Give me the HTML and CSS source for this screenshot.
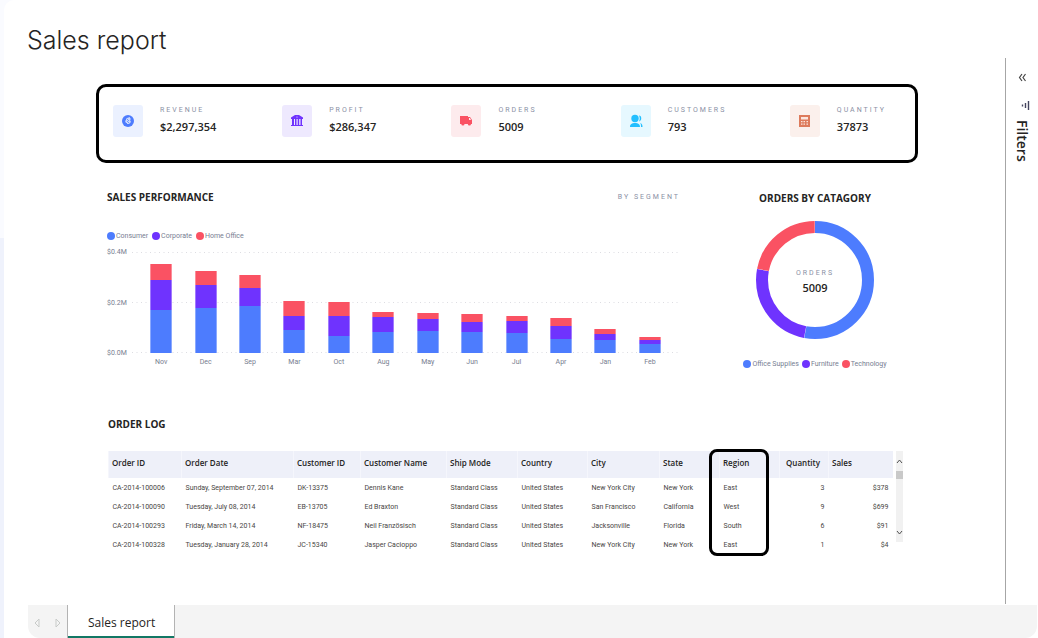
FILE: index.html
```html
<!DOCTYPE html>
<html lang="en">
<head>
<meta charset="utf-8">
<title>Sales report</title>
<link rel="stylesheet" href="styles.css">
</head>
<body>
<div class="page">
  <h1 class="page-title">Sales report</h1>
  <div class="body">
    <main class="report">
      <section class="kpis">
        <div class="kpi">
          <span class="kpi-icon blue"><svg width="14" height="14" viewBox="0 0 14 14"><circle cx="7" cy="7" r="6" fill="#4d7cfe"/><path d="M6 4l3-1v1l1 1-1 1 1 2-2 2H6V9H5L4 7l1-1V5z" fill="#c9d8fd"/><path d="M6 5l2 2M6 7l2 2" stroke="#6f95fb"/></svg></span>
          <div><div class="label">REVENUE</div><div class="value">$2,297,354</div></div>
        </div>
        <div class="kpi">
          <span class="kpi-icon violet"><svg width="14" height="14" viewBox="0 0 14 14"><path d="M1 5V3.500L5 1h4l4 2.500V5zM2 5h2v6H2zM5 5h1.500v6H5zM7.700 5h1.500v6H7.700zM10.500 5H12v6h-1.500zM1 11h12v1H1z" fill="#6f33fe"/><circle cx="7" cy="3" r=".6" fill="#eee9fe"/></svg></span>
          <div><div class="label">PROFIT</div><div class="value">$286,347</div></div>
        </div>
        <div class="kpi">
          <span class="kpi-icon red"><svg width="14" height="14" viewBox="0 0 14 14"><path d="M1 2h8v1h2l2 3v4h-1a1.600 1.600 0 0 1-3.200 0H5.500a1.600 1.600 0 0 1-3.200 0H1z" fill="#fa5263"/><path d="M10 4h1l1 2h-2z" fill="#fdebed"/></svg></span>
          <div><div class="label">ORDERS</div><div class="value">5009</div></div>
        </div>
        <div class="kpi">
          <span class="kpi-icon cyan"><svg width="14" height="14" viewBox="0 0 14 14"><circle cx="6" cy="4.500" r="3.700" fill="#23bfff"/><path d="M1 13c0-3 2-4 5-4s5 1 5 4zM10 1.500c3 0 3 5.500 0 6 1-2 1-4 0-6zM11 9c2 .5 2.500 2 2.500 4H12c0-2 0-3-1-4z" fill="#23bfff"/></svg></span>
          <div><div class="label">CUSTOMERS</div><div class="value">793</div></div>
        </div>
        <div class="kpi">
          <span class="kpi-icon orange"><svg width="14" height="14" viewBox="0 0 14 14"><path d="M1 1h11v12H1z" fill="#dd7b5c"/><path d="M3 3h7v2.500H3zM3 7h1.500v1.300H3zM5.500 7H7v1.300H5.500zM8.500 7H10v1.300H8.500zM3 9.500h1.500v1.300H3zM5.500 9.500H7v1.300H5.500zM8.500 9.500H10v1.300H8.500z" fill="#fbe6df"/></svg></span>
          <div><div class="label">QUANTITY</div><div class="value">37873</div></div>
        </div>
      </section>

      <div class="charts">
        <section class="sales">
          <div class="panel-head"><h2>SALES PERFORMANCE</h2><span class="label">BY SEGMENT</span></div>
          <ul class="legend"><li><i class="c1"></i>Consumer</li><li><i class="c2"></i>Corporate</li><li><i class="c3"></i>Home Office</li></ul>
          <div class="chart">
            <div class="y-axis"><span>$0.4M</span><span>$0.2M</span><span>$0.0M</span></div>
            <div class="plot">
              <svg class="gridlines" width="100%" height="101"><path d="M0 .5h2000M0 50.500h2000M0 100.500h2000" stroke="#dddde2" stroke-dasharray="1 3.500"/></svg>
              <div class="bars">
                <div class="bar"><b class="c3" style="height:16px"></b><b class="c2" style="height:30px"></b><b class="c1" style="height:43px"></b></div>
                <div class="bar"><b class="c3" style="height:14px"></b><b class="c2" style="height:23px"></b><b class="c1" style="height:45px"></b></div>
                <div class="bar"><b class="c3" style="height:13px"></b><b class="c2" style="height:18px"></b><b class="c1" style="height:47px"></b></div>
                <div class="bar"><b class="c3" style="height:15px"></b><b class="c2" style="height:14px"></b><b class="c1" style="height:23px"></b></div>
                <div class="bar"><b class="c3" style="height:14px"></b><b class="c2" style="height:20px"></b><b class="c1" style="height:17px"></b></div>
                <div class="bar"><b class="c3" style="height:5px"></b><b class="c2" style="height:15px"></b><b class="c1" style="height:21px"></b></div>
                <div class="bar"><b class="c3" style="height:6px"></b><b class="c2" style="height:12px"></b><b class="c1" style="height:22px"></b></div>
                <div class="bar"><b class="c3" style="height:8px"></b><b class="c2" style="height:10px"></b><b class="c1" style="height:21px"></b></div>
                <div class="bar"><b class="c3" style="height:5px"></b><b class="c2" style="height:12px"></b><b class="c1" style="height:20px"></b></div>
                <div class="bar"><b class="c3" style="height:8px"></b><b class="c2" style="height:13px"></b><b class="c1" style="height:14px"></b></div>
                <div class="bar"><b class="c3" style="height:5px"></b><b class="c2" style="height:6px"></b><b class="c1" style="height:13px"></b></div>
                <div class="bar"><b class="c3" style="height:3px"></b><b class="c2" style="height:4px"></b><b class="c1" style="height:9px"></b></div>
              </div>
              <div class="x-axis"><span>Nov</span><span>Dec</span><span>Sep</span><span>Mar</span><span>Oct</span><span>Aug</span><span>May</span><span>Jun</span><span>Jul</span><span>Apr</span><span>Jan</span><span>Feb</span></div>
            </div>
          </div>
        </section>
        <section class="category">
          <h2>ORDERS BY CATAGORY</h2>
          <div class="donut">
            <svg width="120" height="120" viewBox="0 0 120 120">
              <g fill="none" stroke-width="12" transform="rotate(-90 60 60)">
                <circle cx="60" cy="60" r="53" stroke="#4d7cfe" pathLength="360" stroke-dasharray="190.500 360"/>
                <circle cx="60" cy="60" r="53" stroke="#6f33fe" pathLength="360" stroke-dasharray="90 360" stroke-dashoffset="-190.800"/>
                <circle cx="60" cy="60" r="53" stroke="#fa5263" pathLength="360" stroke-dasharray="78.700 360" stroke-dashoffset="-281"/>
              </g>
            </svg>
            <div class="donut-text"><span class="label">ORDERS</span><span class="value">5009</span></div>
          </div>
          <ul class="legend"><li><i class="c1"></i>Office Supplies</li><li><i class="c2"></i>Furniture</li><li><i class="c3"></i>Technology</li></ul>
        </section>
      </div>

      <section class="log">
        <h2>ORDER LOG</h2>
        <div class="log-body">
          <div class="table-wrap">
            <table>
              <colgroup><col class="w73"><col class="w112"><col class="w67"><col class="w86"><col class="w71"><col class="w70"><col class="w72"><col class="w60"><col class="w60"><col class="w49"><col class="w64"></colgroup>
              <thead><tr><th>Order ID</th><th>Order Date</th><th>Customer ID</th><th>Customer Name</th><th>Ship Mode</th><th>Country</th><th>City</th><th>State</th><th>Region</th><th class="num">Quantity</th><th>Sales</th></tr></thead>
              <tbody>
                <tr><td>CA-2014-100006</td><td>Sunday, September 07, 2014</td><td>DK-13375</td><td>Dennis Kane</td><td>Standard Class</td><td>United States</td><td>New York City</td><td>New York</td><td>East</td><td class="num">3</td><td class="num">$378</td></tr>
                <tr><td>CA-2014-100090</td><td>Tuesday, July 08, 2014</td><td>EB-13705</td><td>Ed Braxton</td><td>Standard Class</td><td>United States</td><td>San Francisco</td><td>California</td><td>West</td><td class="num">9</td><td class="num">$699</td></tr>
                <tr><td>CA-2014-100293</td><td>Friday, March 14, 2014</td><td>NF-18475</td><td>Neil Französisch</td><td>Standard Class</td><td>United States</td><td>Jacksonville</td><td>Florida</td><td>South</td><td class="num">6</td><td class="num">$91</td></tr>
                <tr><td>CA-2014-100328</td><td>Tuesday, January 28, 2014</td><td>JC-15340</td><td>Jasper Cacioppo</td><td>Standard Class</td><td>United States</td><td>New York City</td><td>New York</td><td>East</td><td class="num">1</td><td class="num">$4</td></tr>
              </tbody>
            </table>
            <div class="region-mark"></div>
          </div>
          <div class="scrollbar">
            <button aria-label="Scroll up"><svg width="7" height="5" viewBox="0 0 7 5"><path d="M1 4l2.500-3L6 4" fill="none" stroke="#505050"/></svg></button>
            <span class="thumb"></span>
            <button aria-label="Scroll down"><svg width="7" height="5" viewBox="0 0 7 5"><path d="M1 1l2.500 3L6 1" fill="none" stroke="#505050"/></svg></button>
          </div>
        </div>
      </section>
    </main>
    <aside class="filters">
      <button aria-label="Expand filters"><svg width="9" height="9" viewBox="0 0 9 9"><path d="M4 1L1.500 4.500 4 8M7.500 1L5 4.500 7.500 8" fill="none" stroke="#444" stroke-width="1.200"/></svg></button>
      <svg class="filter-icon" width="10" height="9" viewBox="0 0 10 9"><path d="M8.500 0v9M5.500 2v5M2.500 3.500v2" stroke="#45455f" stroke-width="1.400"/></svg>
      <span class="filters-text">Filters</span>
    </aside>
  </div>
  <nav class="tabs">
    <div class="arrows">
      <button aria-label="Previous page"><svg width="6" height="10" viewBox="0 0 6 10"><path d="M5 1v8L1 5z" fill="none" stroke="#c8cbc9"/></svg></button>
      <button aria-label="Next page"><svg width="6" height="10" viewBox="0 0 6 10"><path d="M1 1v8l4-4z" fill="none" stroke="#c8cbc9"/></svg></button>
    </div>
    <a class="tab" href="#">Sales report</a>
  </nav>
</div>
</body>
</html>
```
FILE: styles.css
```css
* { box-sizing: border-box; }
body {
  margin: 0;
  font-family: "Open Sans", "Noto Sans", sans-serif;
  color: #252423;
  background: linear-gradient(#fafbff 238px, #eff2fc 238px);
}
button { padding: 0; border: 0; background: none; display: flex; align-items: center; justify-content: center; }
ul { margin: 0; padding: 0; list-style: none; }
h1, h2 { margin: 0; }
h2 { font-size: 10px; line-height: 14px; font-weight: 700; }

.page {
  margin-left: 4px;
  min-height: 100vh;
  display: flex;
  flex-direction: column;
  background: #fff;
  border-top-left-radius: 10px;
}
.page-title {
  padding: 22px 23px 0;
  font-family: Inter, sans-serif;
  font-size: 25px;
  line-height: 36px;
  font-weight: 300;
}
.body { flex: 1; display: flex; }
.report { flex: 1; min-width: 0; padding: 26px 87px 0 92px; }

.label { font-family: Roboto, sans-serif; font-size: 7px; line-height: 10px; letter-spacing: 2px; color: #8a90a5; }
.value { font-size: 11px; line-height: 16px; font-weight: 600; }

.kpis {
  display: grid;
  grid-template-columns: repeat(4, 169fr) 125fr;
  padding: 18px 0 23px 14px;
  border: 3px solid #000;
  border-radius: 10px;
}
.kpi { display: flex; gap: 17px; }
.kpi .value { margin-top: 4px; }
.kpi-icon { width: 30px; height: 32px; border-radius: 3px; display: flex; align-items: center; justify-content: center; }
.blue { background: #ebf1ff; }
.violet { background: #eee9fe; }
.red { background: #fdebed; }
.cyan { background: #e6f8ff; }
.orange { background: #fbf0ec; }

.c1 { background: #4d7cfe; }
.c2 { background: #6f33fe; }
.c3 { background: #fa5263; }

.charts { display: grid; grid-template-columns: 573fr 206fr; gap: 32px; padding: 27px 0 0 11px; }
.panel-head { display: flex; justify-content: space-between; align-items: center; }
.legend { display: flex; gap: 4px; font-family: Roboto, sans-serif; font-size: 7px; line-height: 10px; color: #777e92; }
.legend li { display: flex; align-items: center; gap: 1px; }
.legend i { width: 8px; height: 8px; border-radius: 50%; }
.sales .legend { margin-top: 27px; }
.chart { display: flex; margin-top: 6px; font-family: Roboto, sans-serif; font-size: 7px; line-height: 10px; color: #777e90; }
.y-axis { width: 25px; height: 111px; display: flex; flex-direction: column; justify-content: space-between; }
.plot { flex: 1; display: grid; padding-top: 5px; }
.gridlines, .bars { grid-area: 1 / 1; }
.bars { z-index: 1; height: 101px; display: flex; align-items: flex-end; padding: 0 8px 0 7px; }
.bar { flex: 1; display: flex; flex-direction: column; align-items: center; }
.bar b { width: 22px; border: solid rgba(255, 255, 255, .35); border-width: 0 1px; }
.x-axis { display: flex; padding: 4px 8px 0 7px; }
.x-axis span { flex: 1; text-align: center; }

.category { display: flex; flex-direction: column; align-items: center; padding-top: 1px; }
.donut { display: grid; place-items: center; margin-top: 15px; }
.donut svg, .donut-text { grid-area: 1 / 1; }
.donut-text { display: flex; flex-direction: column; align-items: center; gap: 2px; padding-top: 4px; }
.category .legend { margin-top: 19px; gap: 3px; }

.log { margin-top: 48px; padding-left: 12px; }
.log-body { display: flex; align-items: flex-start; gap: 3px; margin-top: 20px; padding-right: 16px; }
.table-wrap { position: relative; flex: 1; }
table { width: 100%; table-layout: fixed; border-collapse: collapse; }
th, td { padding: 0 4px; text-align: left; white-space: nowrap; }
th { height: 27px; padding-bottom: 3px; background: #eef0f9; font-size: 8px; line-height: 10px; font-weight: 600; border-left: 1px solid #f5f6fc; padding-left: 3px; }
td { height: 19px; font-family: Roboto, sans-serif; font-size: 7px; line-height: 10px; color: #484644; }
.num { text-align: right; }
th.num { padding-right: 8px; }
.w73 { width: 73px; } .w112 { width: 112px; } .w67 { width: 67px; } .w86 { width: 86px; }
.w71 { width: 71px; } .w70 { width: 70px; } .w72 { width: 72px; } .w60 { width: 60px; }
.w49 { width: 49px; } .w64 { width: 64px; }
.region-mark { position: absolute; top: -2px; bottom: -2px; left: 601px; width: 60px; border: 3px solid #000; border-radius: 8px; }
.scrollbar { width: 7px; height: 91px; display: flex; flex-direction: column; background: #f1f1f1; }
.scrollbar button { height: 20px; }
.thumb { height: 8px; margin-bottom: auto; background: #c9c9c9; }

.filters { width: 33px; border-left: 1px solid #a6a6a6; margin-bottom: 1px; display: flex; flex-direction: column; align-items: center; padding-top: 15px; }
.filter-icon { margin: 19px 0 0 6px; }
.filters-text { writing-mode: vertical-rl; margin-top: 10px; font-size: 14px; line-height: 20px; font-weight: 600; }

.tabs { display: flex; height: 33px; margin: 0 1px 0 24px; background: #f4f4f4; border-radius: 0 0 12px 12px; overflow: hidden; }
.arrows { width: 39px; display: flex; justify-content: center; align-items: center; gap: 15px; padding-top: 2px; }
.tab { padding: 8px 19px 0 20px; border: solid #b3b3b3; border-width: 0 1px; box-shadow: inset 0 -2px #117865; background: #fff; font-size: 12px; line-height: 20px; color: #252423; text-decoration: none; }
```
